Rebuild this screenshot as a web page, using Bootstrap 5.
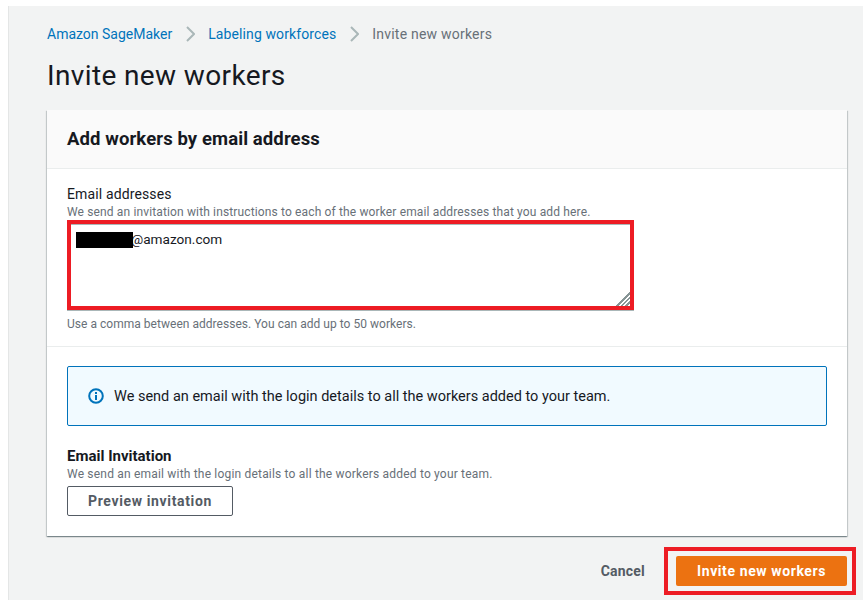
<!doctype html>
<html lang="en">
<head>
    <meta charset="utf-8">
    <meta name="viewport" content="width=device-width, initial-scale=1">
    <link href="https://cdn.jsdelivr.net/npm/bootstrap@5.3.3/dist/css/bootstrap.min.css" rel="stylesheet">
    <title>Invite new workers</title>
    <style>
        html, body { height: 600px; overflow: hidden; }
        body { background: #fff; padding: 6px 5px 0 8px; font-family: Roboto, "Liberation Sans", sans-serif; color: #16191f; font-size: 14px; }
        .page-area { background: #f2f3f3; height: 594px; padding: 18px 16px 0 38px; border-left: 1px solid #e4e6e6; }
        .crumbs { height: 20px; font-size: 14px; line-height: 20px; gap: 13.5px; color: #687078; letter-spacing: .1px; }
        .crumbs a { color: #0073bb; text-decoration: none; }
        .crumbs a:first-child { letter-spacing: 0; }
        .crumbs span { letter-spacing: .22px; }
        .page-title { font-size: 28px; line-height: 34px; font-weight: 400; margin: 15px 0 17px; height: 34px; letter-spacing: .37px; }
        .panel { background: #fff; height: 426px; box-shadow: 0 1px 1px 0 rgba(0,28,36,.3), 1px 1px 1px 0 rgba(0,28,36,.15), -1px 1px 1px 0 rgba(0,28,36,.15); }
        .panel-head { background: #fafafa; height: 59px; border-bottom: 1px solid #eaeded; padding: 0 20px; font-size: 18.5px; font-weight: 700; line-height: 58px; letter-spacing: .1px; }
        .email-part { height: 178px; border-bottom: 1px solid #eaeded; padding: 15px 20px 0; }
        .field-name { font-size: 14px; line-height: 20px; letter-spacing: .13px; }
        .hint { font-size: 12px; line-height: 16px; color: #687078; letter-spacing: .14px; }
        .hint-short { letter-spacing: .03px; margin-top: 6px; }
        .hint-team { letter-spacing: .19px; }
        .mark-box { border: 4px solid #ed1c24; box-shadow: 0 1px 0 #aab7b8; }
        .area-wrap { width: 567px; height: 90px; }
        .area-wrap textarea { display: block; width: 100%; height: 100%; border: 0; border-top: 1px solid #aab7b8; border-radius: 0; padding: 4px 5px 0 60px; font-size: 13.6px; line-height: 20px; color: #16191f; box-shadow: none; }
        .area-wrap textarea::-webkit-resizer { background: linear-gradient(135deg, #fff 52%, transparent 52%), repeating-linear-gradient(135deg, #fff 0 1.6px, #879596 1.6px 3.2px); }
        .redact { position: absolute; left: 5px; top: 8px; width: 57px; height: 16px; background: #000; }
        .info-box { height: 60px; background: #f1faff; border: 1px solid #0073bb; border-radius: 2px; margin: 0 0 20px; padding: 0 20px; gap: 10px; font-size: 14.5px; }
        .info-box span { padding-top: 1px; }
        .invite-part { padding: 19px 20px 0; }
        .field-strong { font-size: 15px; font-weight: 700; line-height: 20px; }
        .btn-preview { width: 166px; height: 30px; border: 1px solid #545b64; border-radius: 2px; color: #545b64; background: #fff; font-size: 14px; font-weight: 700; padding: 0; margin-top: 4px; letter-spacing: .65px; }
        .page-foot { margin-top: 11px; gap: 0; }
        .btn-cancel { color: #545b64; font-size: 14px; font-weight: 700; background: none; border: 0; padding: 0; margin-right: 19px; letter-spacing: .2px; }
        .orange-mark { border: 4px solid #ed1c24; padding: 5px 5px 5px 8px; margin-right: -9px; width: 192px; height: 48px; }
        .btn-invite { display: block; width: 171px; height: 30px; padding: 0; background: #ec7211; color: #fff; font-size: 14px; font-weight: 700; border: 0; border-radius: 2px; letter-spacing: .6px; }
    </style>
</head>
<body>
    <div class="page-area">
        <nav class="crumbs d-flex align-items-center">
            <a href="#">Amazon SageMaker</a>
            <svg width="9" height="16" viewBox="0 0 9 16"><path d="M1 1l7 7-7 7" fill="none" stroke="#aab7b8" stroke-width="2"/></svg>
            <a href="#">Labeling workforces</a>
            <svg width="9" height="16" viewBox="0 0 9 16"><path d="M1 1l7 7-7 7" fill="none" stroke="#aab7b8" stroke-width="2"/></svg>
            <span>Invite new workers</span>
        </nav>
        <h1 class="page-title">Invite new workers</h1>

        <div class="panel">
            <div class="panel-head">Add workers by email address</div>
            <div class="email-part">
                <div class="field-name">Email addresses</div>
                <div class="hint">We send an invitation with instructions to each of the worker email addresses that you add here.</div>
                <div class="area-wrap mark-box position-relative">
                    <textarea class="form-control" aria-label="Email addresses">@amazon.com</textarea>
                    <span class="redact"></span>
                </div>
                <div class="hint hint-short">Use a comma between addresses. You can add up to 50 workers.</div>
            </div>
            <div class="invite-part">
                <div class="info-box d-flex align-items-center">
                    <svg width="16" height="16" viewBox="0 0 16 16"><circle cx="8" cy="8" r="6.8" fill="none" stroke="#0073bb" stroke-width="2"/><rect x="7" y="7" width="2" height="5" fill="#0073bb"/><rect x="7" y="4" width="2" height="2" fill="#0073bb"/></svg>
                    <span>We send an email with the login details to all the workers added to your team.</span>
                </div>
                <div class="field-strong">Email Invitation</div>
                <div class="hint hint-team">We send an email with the login details to all the workers added to your team.</div>
                <button class="btn btn-preview" type="button">Preview invitation</button>
            </div>
        </div>

        <div class="page-foot d-flex justify-content-end align-items-center">
            <button class="btn btn-cancel" type="button">Cancel</button>
            <div class="orange-mark">
                <button class="btn btn-invite" type="button">Invite new workers</button>
            </div>
        </div>
    </div>
</body>
</html>
